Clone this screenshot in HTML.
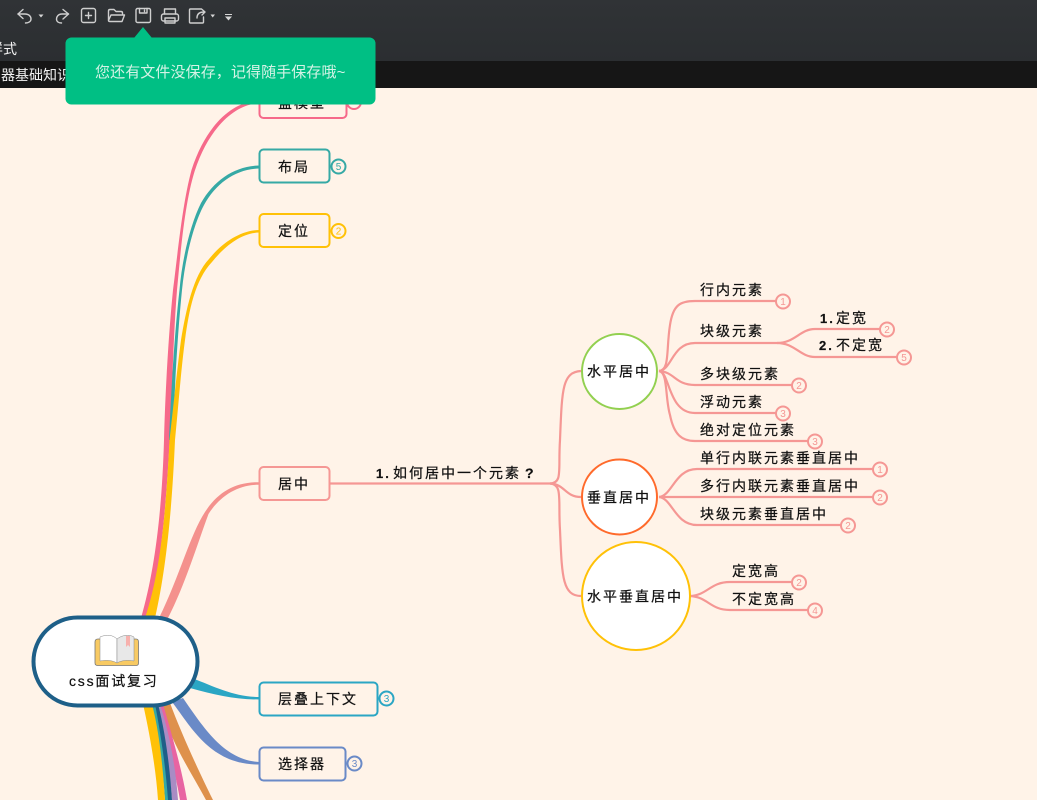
<!DOCTYPE html>
<html lang="zh-CN">
<head>
<meta charset="utf-8">
<title>css面试复习</title>
<style>
html,body{margin:0;padding:0;width:1037px;height:800px;overflow:hidden;background:#fff3e8}
svg{position:absolute;left:0;top:0;display:block}
text{font-family:"Liberation Sans","Noto Sans CJK SC",sans-serif;fill:#111}
.n{font-size:14px;letter-spacing:2px;stroke:#111;stroke-width:.22px}
.b{font-size:10px;letter-spacing:0;text-anchor:middle}
.w{fill:#f4f4f4;font-size:14px}
</style>
</head>
<body>
<svg width="1037" height="800" viewBox="0 0 1037 800" xmlns="http://www.w3.org/2000/svg">
<rect width="1037" height="800" fill="#fff3e8"/>

<!-- tapered branches -->
<path d="M259 100.500C235 101 207 122 191.500 170C182 205 177 260 173 290C168 340 165 400 164 440C162 510 155 570 141 618L149 618C160 570 166 510 169.700 440C172 400 173 340 177 290C180 260 184 205 194.700 171C209 127 236 103.500 259 103.500Z" fill="#f6698a"/>
<path d="M259 165.500C235 166 214 180 201 203C190 225 182 260 179.500 290C176 320 172 370 169 440L173 440C175 370 179 320 182 290C185 260 193 225 204 205C216 183 236 169 259 168.500Z" fill="#36a9a5"/>
<path d="M259 230C240 230.500 222 243 209 259C193 276 186 310 181 340C177 370 173 410 169.500 440C166 510 161 570 145 618L155 618C166 570 172 510 175 440C178 410 181 370 185 340C189 310 195 280 212 262C225 246 241 233 259 232.500Z" fill="#ffc107"/>
<path d="M259 482.200C235 482 218 492 205 512C190 535 180 575 159 618L168 618C185 585 197 545 208.500 514C220 496 238 484.500 259 484.800Z" fill="#f4918d"/>
<path d="M192 678C215 687 235 697 259 697L259 699.500C235 699.500 215 695 190 688Z" fill="#2ba6c4"/>
<path d="M172 702C190 725 210 765 259 764.500L259 762C225 760 205 730 183 698Z" fill="#6a8ac7"/>
<path d="M161 706C172 745 190 770 206 800L213 800C198 770 180 730 170 703Z" fill="#de914c"/>
<path d="M157 704C165 735 175 770 180 800L187 800C182 770 172 735 163 704Z" fill="#e864a2"/>
<path d="M154 704C163 735 170 770 172 800L178 800C176 770 170 735 160 704Z" fill="#a98cc4"/>
<path d="M153 704C160 735 165 770 167 800L172 800C170 770 166 735 158 704Z" fill="#1e5f88"/>
<path d="M151 704C158 735 163 770 165 800L168 800C166 770 161 735 155 704Z" fill="#36a9a5"/>
<path d="M143 704C150 735 156 770 158 800L165 800C163 770 160 735 152 704Z" fill="#ffc107"/>

<!-- level-2 boxes -->
<g fill="#fff3e8" stroke-width="2">
<rect x="259.500" y="88" width="87" height="30" rx="4" stroke="#f6698a"/>
<rect x="259.500" y="149.500" width="70" height="33" rx="4" stroke="#36a9a5"/>
<rect x="259.500" y="214" width="70" height="33" rx="4" stroke="#ffc107"/>
<rect x="259.500" y="467" width="70" height="33" rx="4" stroke="#f59794"/>
<rect x="259.500" y="682.500" width="118" height="33" rx="4" stroke="#2ba6c4"/>
<rect x="259.500" y="747.500" width="86" height="33" rx="4" stroke="#6a8ac7"/>
</g>
<text class="n" x="278" y="108">盒模型</text>
<text class="n" x="278" y="172">布局</text>
<text class="n" x="278" y="236">定位</text>
<text class="n" x="278" y="489">居中</text>
<text class="n" x="278" y="704">层叠上下文</text>
<text class="n" x="278" y="769">选择器</text>

<!-- pale connectors -->
<g fill="none" stroke="#f59794" stroke-width="2.200">
<path d="M330 483.500H550"/>
<path d="M550 483.500C563 483 558 470 560 440C562 390 562 372 581 371"/>
<path d="M550 483.500C565 484 565 497 581 497"/>
<path d="M550 483.500C563 484 558 500 560 530C562 575 562 596 581 596"/>
<path d="M659 371C670 370 666 350 670 325C673 305 680 301 695 301H777"/>
<path d="M659 371C672 370 672 343 695 343H777C795 343 800 329 815 329H881"/>
<path d="M777 343C795 343 800 357 815 357H898"/>
<path d="M659 371C675 372 675 385 695 385H793"/>
<path d="M659 371C670 372 668 413 695 413H777"/>
<path d="M659 371C668 372 665 398 670 415C674 435 682 441 695 441H809"/>
<path d="M659 497C672 496 675 469 697 469H874"/>
<path d="M659 497H874"/>
<path d="M659 497C672 498 675 525 697 525H842"/>
<path d="M690 596C708 595 710 582 730 582H793"/>
<path d="M690 596C708 597 710 610 730 610H809"/>
</g>

<!-- circles -->
<circle cx="619.500" cy="371.500" r="37.500" fill="#fff" stroke="#92d050" stroke-width="2"/>
<circle cx="619.500" cy="497" r="37.500" fill="#fff" stroke="#ff6a2b" stroke-width="2"/>
<circle cx="636" cy="596" r="54" fill="#fff" stroke="#ffc107" stroke-width="2"/>
<text class="n" x="587" y="376.500">水平居中</text>
<text class="n" x="587" y="502.500">垂直居中</text>
<text class="n" x="587" y="601.500">水平垂直居中</text>

<!-- labels -->
<g>
<text class="n" x="376" y="478" style="font-weight:700;font-size:13px">1.</text>
<text class="n" x="393" y="478">如何居中一个元素</text>
<text class="n" x="525" y="478" style="font-weight:700">?</text>
<text class="n" x="700" y="295">行内元素</text>
<text class="n" x="700" y="336">块级元素</text>
<text class="n" x="820" y="323" style="font-weight:700;font-size:13px">1.</text>
<text class="n" x="836" y="323">定宽</text>
<text class="n" x="819" y="350" style="font-weight:700;font-size:13px">2.</text>
<text class="n" x="836" y="350">不定宽</text>
<text class="n" x="700" y="379">多块级元素</text>
<text class="n" x="700" y="407">浮动元素</text>
<text class="n" x="700" y="435">绝对定位元素</text>
<text class="n" x="700" y="463">单行内联元素垂直居中</text>
<text class="n" x="700" y="491">多行内联元素垂直居中</text>
<text class="n" x="700" y="519">块级元素垂直居中</text>
<text class="n" x="732" y="576">定宽高</text>
<text class="n" x="732" y="604">不定宽高</text>
</g>

<!-- badges -->
<g fill="#fff3e8" stroke-width="2">
<g stroke="#f59794">
<circle cx="783" cy="301.500" r="7"/><circle cx="887" cy="329.500" r="7"/><circle cx="904" cy="357.500" r="7"/>
<circle cx="799" cy="385.500" r="7"/><circle cx="783" cy="413.500" r="7"/><circle cx="815" cy="441.500" r="7"/>
<circle cx="880" cy="469.500" r="7"/><circle cx="880" cy="497.500" r="7"/><circle cx="848" cy="525.500" r="7"/>
<circle cx="799" cy="582.500" r="7"/><circle cx="815" cy="610.500" r="7"/>
</g>
<circle cx="354" cy="102" r="7" stroke="#f6698a"/>
<circle cx="338.500" cy="166.500" r="7" stroke="#36a9a5"/>
<circle cx="338.500" cy="231" r="7" stroke="#ffc107"/>
<circle cx="386.500" cy="698.500" r="7" stroke="#2ba6c4"/>
<circle cx="354.500" cy="763.500" r="7" stroke="#6a8ac7"/>
</g>
<g>
<text class="b" x="783" y="305" style="fill:#f59794">1</text><text class="b" x="887" y="333" style="fill:#f59794">2</text>
<text class="b" x="904" y="361" style="fill:#f59794">5</text><text class="b" x="799" y="389" style="fill:#f59794">2</text>
<text class="b" x="783" y="417" style="fill:#f59794">3</text><text class="b" x="815" y="445" style="fill:#f59794">3</text>
<text class="b" x="880" y="473" style="fill:#f59794">1</text><text class="b" x="880" y="501" style="fill:#f59794">2</text>
<text class="b" x="848" y="529" style="fill:#f59794">2</text><text class="b" x="799" y="586" style="fill:#f59794">2</text>
<text class="b" x="815" y="614" style="fill:#f59794">4</text>
<text class="b" x="338.500" y="170" style="fill:#36a9a5">5</text>
<text class="b" x="338.500" y="234.500" style="fill:#ffc107">2</text>
<text class="b" x="386.500" y="702" style="fill:#2ba6c4">3</text>
<text class="b" x="354.500" y="767" style="fill:#6a8ac7">3</text>
</g>

<!-- root -->
<rect x="33.500" y="617.500" width="164" height="88" rx="44" fill="#fff" stroke="#1e5f88" stroke-width="4"/>
<g>
<path d="M98 639H136Q138.500 639 138.500 642V663Q138.500 665.500 136 665.500H98Q95 665.500 95 663V642Q95 639 98 639Z" fill="#f8ca63" stroke="#777" stroke-width=".8"/>
<path d="M100 637C107 634 113 635 117 639V663C112 660 106 660 100 661Z" fill="#fff" stroke="#888" stroke-width=".5"/>
<path d="M117 639C122 635 129 634 134 637V661C128 660 122 660 117 663Z" fill="#e8e8e8" stroke="#888" stroke-width=".5"/>
<path d="M126 636H130V647L128 645L126 647Z" fill="#f7b1ad"/>
</g>
<text x="69" y="686" style="font-size:14px;letter-spacing:1.800px;stroke:#111;stroke-width:.2px">css面试复习</text>

<!-- top chrome -->
<defs>
<linearGradient id="bar" x1="0" y1="0" x2="0" y2="1"><stop offset="0" stop-color="#303336"/><stop offset="1" stop-color="#2b2e31"/></linearGradient>
</defs>
<rect width="1037" height="61" fill="url(#bar)"/>
<rect y="61" width="1037" height="27" fill="#161616"/>
<text class="w" x="-11" y="54">样式</text>
<text class="w" x="1" y="80">器基础知识</text>

<!-- toolbar icons -->
<g fill="none" stroke="#cfcfcf" stroke-width="1.400" stroke-linecap="round" stroke-linejoin="round">
<path d="M23 9.500L18 14L23 18.500"/>
<path d="M18 14H25C29 14 31 16.500 31 19C31 21.500 28.500 23 25.500 23"/>
<path d="M63 9.500L68.500 14L63 19"/>
<path d="M68.500 14H62C58 14 56.500 17 56.500 19C56.500 21.500 58.500 23 61.500 23"/>
<rect x="81.500" y="8.500" width="14" height="14" rx="2"/>
<path d="M88.500 12.500V18.500M85.500 15.500H91.500"/>
<path d="M108.500 20V11Q108.500 9.500 110 9.500H114L116 11.500H121Q122.500 11.500 122.500 13V14"/>
<path d="M108.500 20.500L111 15H124.500L122 21.500H110Q108.500 21.500 108.500 20.500Z"/>
<rect x="136" y="8.500" width="14.500" height="14" rx="1.500"/>
<path d="M139.500 8.500V13H147V8.500M144.500 10V11.500"/>
<path d="M164.500 14V9H175.500V14"/>
<rect x="161.500" y="14" width="17" height="7" rx="2"/>
<rect x="165" y="18" width="10" height="5"/>
<path d="M201 9H190.500Q189.500 9 189.500 10V22Q189.500 23 190.500 23H202.500Q203.500 23 203.500 22V17"/>
<path d="M197 18C197 14 199.500 12 204 12M201.500 9L205 12L202 15"/>
</g>
<g fill="#d6d6d6">
<path d="M38.500 14.500H43.500L41 17.500Z"/>
<path d="M210.500 14.500H215L212.700 17.500Z"/>
<path d="M225 14H232V15H225Z"/>
<path d="M225 16.500H232L228.500 20.500Z"/>
</g>

<!-- tip -->
<path d="M134 38L143 27L152 38Z" fill="#00bf84"/>
<rect x="65.500" y="37.500" width="310" height="67" rx="6" fill="#00bf84"/>
<text x="95" y="77" style="font-size:15px;letter-spacing:.1px;fill:#d4f3e6">您还有文件没保存，记得随手保存哦~</text>
</svg>
</body>
</html>
